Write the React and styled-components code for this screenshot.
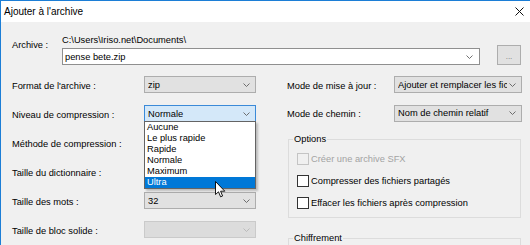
import React from "react";
import styled, { createGlobalStyle } from "styled-components";

const GlobalStyle = createGlobalStyle`
  html, body {
    margin: 0;
    padding: 0;
    height: 245px;
    overflow: hidden;
    background: #f0f0f0;
  }
  body {
    font-family: "Liberation Sans", Arial, sans-serif;
    font-size: 9.3px;
    color: #000;
  }
`;

const Window = styled.div`
  position: relative;
  width: 530px;
  height: 245px;
  box-sizing: border-box;
  border-top: 1px solid #1c7ed6;
  border-left: 1px solid #1c7ed6;
  background: #f0f0f0;
  overflow: hidden;
`;

const TitleBar = styled.div`
  height: 21px;
  background: #fff;
  display: flex;
  align-items: center;
  justify-content: space-between;
  padding: 0 6px 0 3px;
`;

const Title = styled.span`
  font-size: 10px;
  line-height: 12px;
`;

const Body = styled.div`
  padding: 0 8px 0 11px;
`;

const ArchiveRow = styled.div`
  display: flex;
  padding-top: 12px;
`;

const ArchiveLabel = styled.div`
  width: 50px;
  margin-top: 5px;
  line-height: 12px;
`;

const ArchiveField = styled.div`
  width: 418px;
  display: flex;
  flex-direction: column;
`;

const PathText = styled.div`
  height: 12px;
  line-height: 12px;
  margin-bottom: 2px;
`;

const TextCombo = styled.div`
  height: 17px;
  box-sizing: border-box;
  border: 1px solid #8f8f8f;
  background: #fff;
  display: flex;
  align-items: center;
  padding: 0 6px 0 2px;
  span {
    flex: 1;
  }
`;

const BrowseButton = styled.div`
  align-self: flex-end;
  margin-left: 17px;
  width: 24px;
  height: 20px;
  box-sizing: border-box;
  border: 1px solid #adadad;
  background: #e1e1e1;
  color: #777;
  font-size: 8px;
  display: flex;
  align-items: center;
  justify-content: center;
  padding-top: 3px;
`;

const Columns = styled.div`
  display: flex;
  margin-top: 5px;
`;

const LeftCol = styled.div`
  width: 244px;
`;

const RightCol = styled.div`
  width: 235px;
  margin-left: 31px;
`;

const FieldRow = styled.div`
  display: grid;
  grid-template-columns: ${(p) => p.$labelWidth}px minmax(0, 1fr);
  align-items: center;
  height: ${(p) => p.$h || 29}px;
`;

const Label = styled.div`
  line-height: 12px;
  padding-top: 2px;
`;

const comboColors = {
  normal: { bg: "#e1e1e1", border: "#adadad", arrow: "#606060" },
  focus: { bg: "#d4e8f9", border: "#3b8ad8", arrow: "#606060" },
  disabled: { bg: "#dcdcdc", border: "#cacaca", arrow: "#b5b5b5" },
};

const ComboBox = styled.div`
  position: relative;
  height: 17px;
  min-width: 0;
  box-sizing: border-box;
  border: 1px solid ${(p) => comboColors[p.$state || "normal"].border};
  background: ${(p) => comboColors[p.$state || "normal"].bg};
  display: flex;
  align-items: center;
  padding: 0 5px 0 3px;
`;

const ComboText = styled.span`
  flex: 1;
  min-width: 0;
  overflow: hidden;
  white-space: nowrap;
  margin-right: 2px;
  line-height: 12px;
`;

const DropList = styled.div`
  position: absolute;
  top: 100%;
  left: -1px;
  right: -1px;
  background: #fff;
  border: 1px solid #646464;
  box-shadow: 2px 2px 2px rgba(0, 0, 0, 0.22);
  z-index: 2;
`;

const DropItem = styled.div`
  height: 11px;
  line-height: 11px;
  padding-left: 2px;
  background: ${(p) => (p.$active ? "#0078d7" : "transparent")};
  color: ${(p) => (p.$active ? "#fff" : "#000")};
`;

const Group = styled.fieldset`
  margin: ${(p) => p.$mt}px 0 0 1px;
  width: 233px;
  box-sizing: border-box;
  border: 1px solid #dcdcdc;
  padding: 3px 8px 3px;
  min-height: ${(p) => p.$minH || 0}px;
  legend {
    padding: 0 1px;
    margin-left: -4px;
    line-height: 12px;
  }
`;

const CheckRow = styled.label`
  display: flex;
  align-items: center;
  height: 22px;
  color: ${(p) => (p.$disabled ? "#a3a3a3" : "#000")};
`;

const CheckBox = styled.span`
  width: 12px;
  height: 12px;
  box-sizing: border-box;
  border: 1px solid ${(p) => (p.$disabled ? "#c4c4c4" : "#333")};
  background: ${(p) => (p.$disabled ? "#f0f0f0" : "#fff")};
  margin-right: 2px;
  flex: none;
`;

const Cursor = styled.svg`
  position: absolute;
  left: 214px;
  top: 180px;
  z-index: 5;
`;

function Chevron({ color = "#606060" }) {
  return (
    <svg width="7" height="4" viewBox="0 0 7 4" style={{ flex: "none" }}>
      <polyline points="0.5,0.5 3.5,3.5 6.5,0.5" fill="none" stroke={color} strokeWidth="0.9" />
    </svg>
  );
}

function Combo({ value, state = "normal", children }) {
  return (
    <ComboBox $state={state}>
      <ComboText>{value}</ComboText>
      <Chevron color={comboColors[state].arrow} />
      {children}
    </ComboBox>
  );
}

const levels = ["Aucune", "Le plus rapide", "Rapide", "Normale", "Maximum", "Ultra"];

export default function App() {
  return (
    <Window>
      <GlobalStyle />
      <TitleBar>
        <Title>Ajouter à l'archive</Title>
        <svg width="9" height="9" viewBox="0 0 9 9">
          <path d="M0.5 0.5 L8.5 8.5 M8.5 0.5 L0.5 8.5" stroke="#111" strokeWidth="1" />
        </svg>
      </TitleBar>
      <Body>
        <ArchiveRow>
          <ArchiveLabel>Archive :</ArchiveLabel>
          <ArchiveField>
            <PathText>C:\Users\Iriso.net\Documents\</PathText>
            <TextCombo>
              <span>pense bete.zip</span>
              <Chevron />
            </TextCombo>
          </ArchiveField>
          <BrowseButton>...</BrowseButton>
        </ArchiveRow>
        <Columns>
          <LeftCol>
            <FieldRow $labelWidth={132}>
              <Label>Format de l'archive :</Label>
              <Combo value="zip" />
            </FieldRow>
            <FieldRow $labelWidth={132}>
              <Label>Niveau de compression :</Label>
              <Combo value="Normale" state="focus">
                <DropList>
                  {levels.map((l) => (
                    <DropItem key={l} $active={l === "Ultra"}>
                      {l}
                    </DropItem>
                  ))}
                </DropList>
              </Combo>
            </FieldRow>
            <FieldRow $labelWidth={132}>
              <Label>Méthode de compression :</Label>
              <Combo value="" />
            </FieldRow>
            <FieldRow $labelWidth={132}>
              <Label>Taille du dictionnaire :</Label>
              <Combo value="" />
            </FieldRow>
            <FieldRow $labelWidth={132}>
              <Label>Taille des mots :</Label>
              <Combo value="32" />
            </FieldRow>
            <FieldRow $labelWidth={132}>
              <Label>Taille de bloc solide :</Label>
              <Combo value="" state="disabled" />
            </FieldRow>
          </LeftCol>
          <RightCol>
            <FieldRow $labelWidth={107}>
              <Label>Mode de mise à jour :</Label>
              <Combo value="Ajouter et remplacer les fichiers" />
            </FieldRow>
            <FieldRow $labelWidth={107} $h={28}>
              <Label>Mode de chemin :</Label>
              <Combo value="Nom de chemin relatif" />
            </FieldRow>
            <Group $mt={6}>
              <legend>Options</legend>
              <CheckRow $disabled>
                <CheckBox $disabled />
                Créer une archive SFX
              </CheckRow>
              <CheckRow>
                <CheckBox />
                Compresser des fichiers partagés
              </CheckRow>
              <CheckRow>
                <CheckBox />
                Effacer les fichiers après compression
              </CheckRow>
            </Group>
            <Group $mt={14} $minH={60}>
              <legend>Chiffrement</legend>
            </Group>
          </RightCol>
        </Columns>
      </Body>
      <Cursor width="11" height="17" viewBox="0 0 11 17">
        <path
          d="M0.5 0.5 L0.5 13.5 L3.5 10.8 L5.6 15.8 L7.6 15 L5.6 10.2 L9.8 10.2 Z"
          fill="#fff"
          stroke="#000"
          strokeWidth="0.9"
          strokeLinejoin="miter"
        />
      </Cursor>
    </Window>
  );
}
